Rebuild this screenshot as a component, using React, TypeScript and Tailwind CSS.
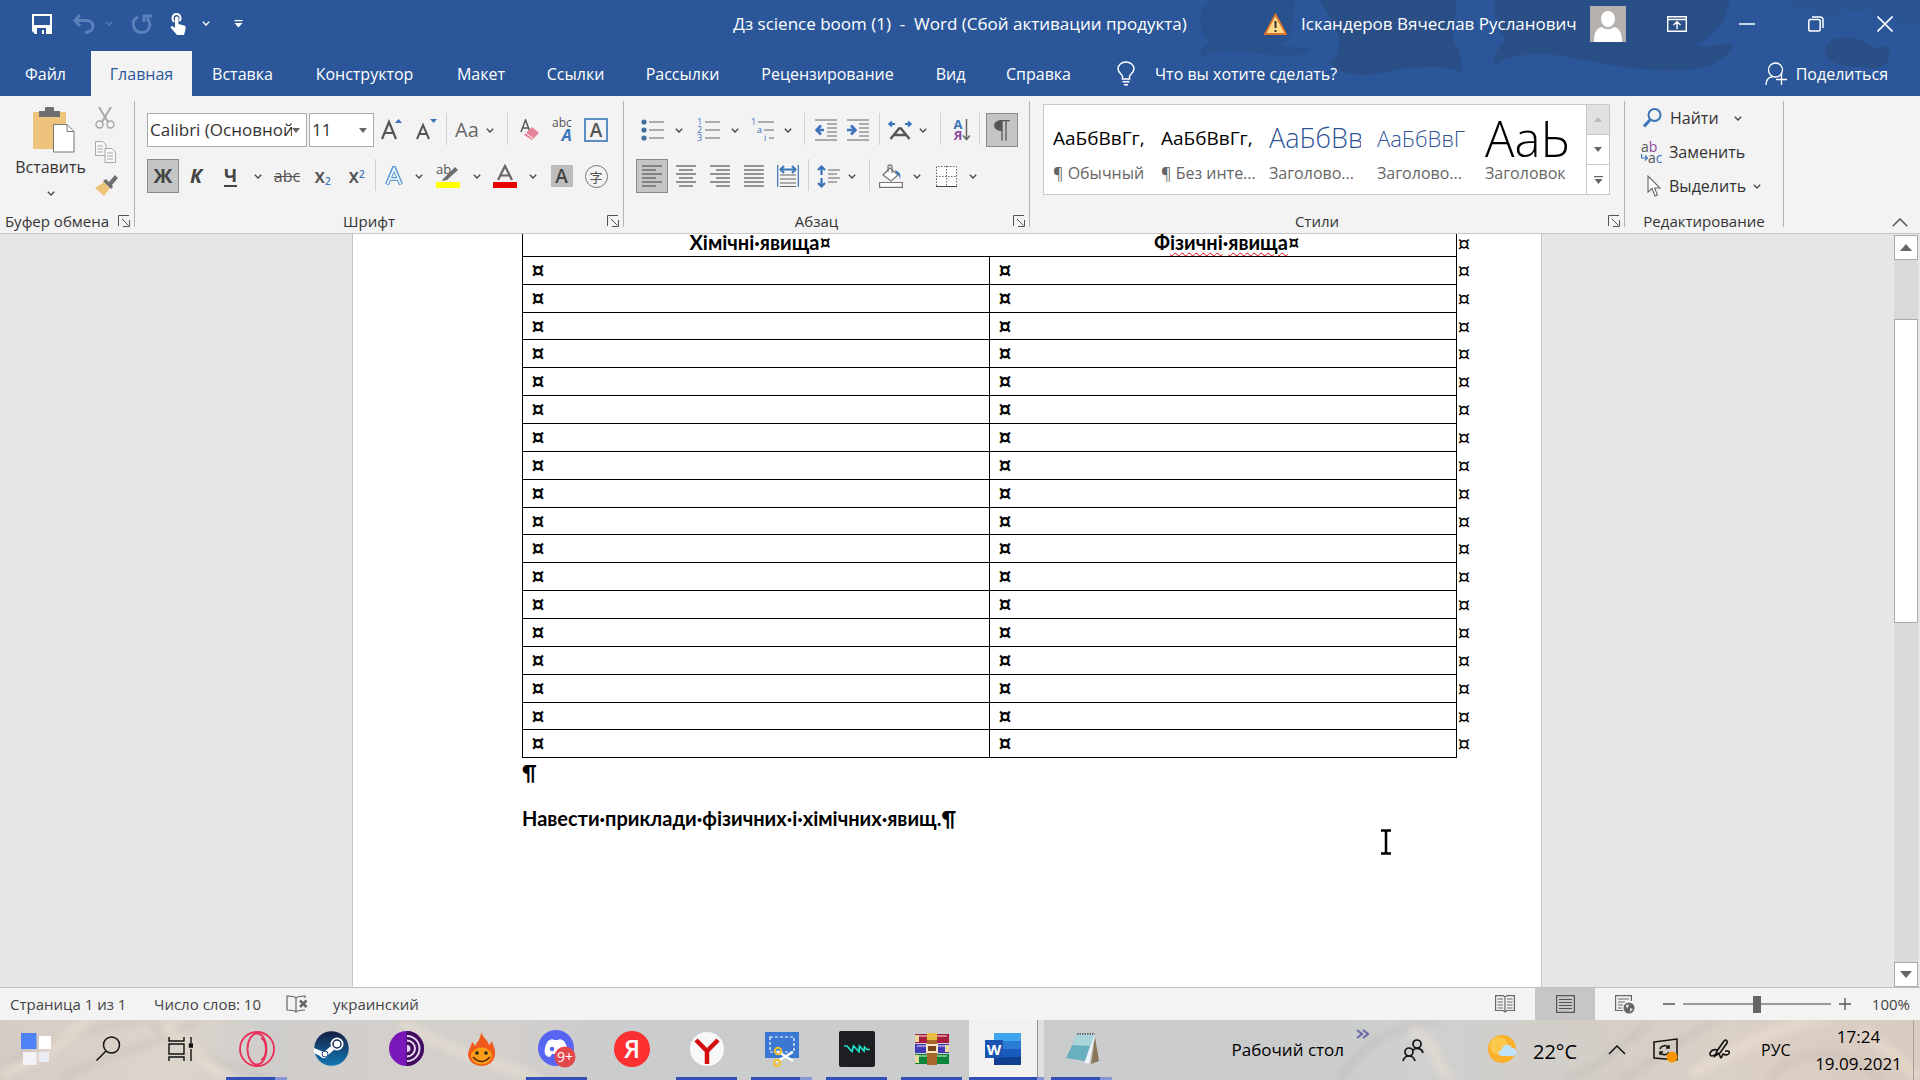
import React from "react";

const UI = "font-['Open_Sans','Noto_Sans',sans-serif]";

function Chevron({ className = "text-[#444]" }: { className?: string }) {
  return (
    <svg className={`shrink-0 ${className}`} width="8" height="5" viewBox="0 0 8 5" fill="none" stroke="currentColor" strokeWidth="1.3">
      <path d="M0.8 0.8 L4 4 L7.2 0.8" />
    </svg>
  );
}

function Tool({ w, label, active, children }: { w: string; label: string; active?: boolean; children: React.ReactNode }) {
  return (
    <button
      aria-label={label}
      className={`flex h-[34px] shrink-0 items-center justify-center ${w} ${active ? "border border-[#8a8a8a] bg-[#c5c5c5]" : ""}`}
    >
      {children}
    </button>
  );
}

function Drop({ w }: { w: string }) {
  return (
    <Tool w={w} label="Параметры">
      <Chevron />
    </Tool>
  );
}

function Sep({ w }: { w: string }) {
  return (
    <div className={`flex h-[32px] shrink-0 justify-center ${w}`}>
      <div className="w-px bg-[#d0d0d0]" />
    </div>
  );
}

function Launcher() {
  return (
    <button aria-label="Дополнительно" className="p-1">
      <svg width="12" height="12" viewBox="0 0 12 12" fill="none" stroke="#555" strokeWidth="1">
        <path d="M0.5 11 V0.5 H11 M4 4 L10.5 10.5 M11.5 5 V11.5 H5" />
      </svg>
    </button>
  );
}

function Group({ w, label, launcher, children }: { w: string; label: string; launcher?: boolean; children: React.ReactNode }) {
  return (
    <section className={`flex shrink-0 flex-col border-r border-[#b4b4b4] ${w}`}>
      <div className="flex-1">{children}</div>
      <div className="flex h-3 items-center text-[15px] leading-5 text-[#333]">
        <span className="flex-1 whitespace-nowrap text-center">{label}</span>
        {launcher && <Launcher />}
      </div>
    </section>
  );
}

function Lines({ rows }: { rows: [number, number][] }) {
  return (
    <svg width="20" height="22" viewBox="0 0 20 22" stroke="#555" strokeWidth="1.2">
      {rows.map(([a, b], i) => (
        <path key={i} d={`M${a} ${1 + i * 4} H${b}`} />
      ))}
    </svg>
  );
}

const tabs = [
  { t: "Вставка", w: "w-[101px]" },
  { t: "Конструктор", w: "w-[143px]" },
  { t: "Макет", w: "w-[90px]" },
  { t: "Ссылки", w: "w-[99px]" },
  { t: "Рассылки", w: "w-[115px]" },
  { t: "Рецензирование", w: "w-[175px]" },
  { t: "Вид", w: "w-[71px]" },
  { t: "Справка", w: "w-[105px]" },
];

function TitleBar() {
  return (
    <div className="relative flex h-[51px] items-center pb-1 text-white">
      <div className="flex w-[260px] shrink-0 items-center pl-8">
        <button aria-label="Сохранить" className="w-[41px]">
          <svg width="20" height="20" viewBox="0 0 20 20">
            <path d="M0 0 H20 V20 H3 L0 17 Z" fill="#fff" />
            <path d="M2 2 H18 V11 H2 Z" fill="#2b579a" />
            <path d="M5 14 H14 V20 H12 V16 H10 V20 H5 Z" fill="#2b579a" />
          </svg>
        </button>
        <button aria-label="Отменить" className="w-8 text-[#5b80bb]">
          <svg width="22" height="20" viewBox="0 0 22 20" fill="none" stroke="currentColor" strokeWidth="3">
            <path d="M7 1 L2 6.500 L7 12 M2 6.500 H13 C22 6.500 23 18 12 18.500" />
          </svg>
        </button>
        <button aria-label="История" className="w-[27px]">
          <Chevron className="text-[#5b80bb]" />
        </button>
        <button aria-label="Повторить" className="w-[38px] text-[#5b80bb]">
          <svg width="20" height="20" viewBox="0 0 20 20" fill="none" stroke="currentColor" strokeWidth="3">
            <path d="M6 3 C-2 7 1 18 9.500 18.500 C18 18.500 20 9 15 4 M12 8 V2 H20" />
          </svg>
        </button>
        <button aria-label="Сенсорный режим" className="w-8">
          <svg width="18" height="22" viewBox="0 0 18 22">
            <path d="M4 9 C1 5 3 1 6.500 1 C10 1 12 5 9.500 8" fill="none" stroke="#fff" strokeWidth="2" />
            <path d="M5 5 C5 3 8.500 3 8.500 5 V11 L14 12.500 C16 13 16 14 15.500 16 L14 22 H7 L1 15 C0 13.500 2 12.500 3 13.500 L5 15 Z" fill="#fff" />
          </svg>
        </button>
        <button aria-label="Режим" className="w-8">
          <Chevron className="text-white" />
        </button>
        <button aria-label="Настройка панели">
          <svg width="9" height="8" viewBox="0 0 9 8" fill="#fff">
            <path d="M0.5 0 H8.500 V1.300 H0.5 Z M0.500 3 H8.500 L4.500 7.500 Z" />
          </svg>
        </button>
      </div>
      <h1 className="flex-1 whitespace-pre pl-[396px] text-center text-[17px] leading-6">
        {"Дз science boom (1)  -  Word (Сбой активации продукта)"}
      </h1>
      <div className="flex shrink-0 items-center">
        <svg className="mr-3.5" width="23" height="22" viewBox="0 0 23 22">
          <path d="M11.500 1.500 L22 21 H1 Z" fill="#ffd98b" stroke="#d9762b" strokeWidth="1.800" />
          <path d="M11.500 8 V15 M11.500 17 V19" stroke="#333" strokeWidth="2" />
        </svg>
        <span className="w-[289px] whitespace-nowrap text-[17px] leading-6">Іскандеров Вячеслав Русланович</span>
        <svg width="36" height="36" viewBox="0 0 36 36">
          <path d="M0 0 H36 V36 H0 Z" fill="#b3b0ad" />
          <ellipse cx="18" cy="13" rx="7" ry="8" fill="#fff" />
          <path d="M4 36 C4 26 7 22 12 21 C15 24 21 24 24 21 C29 22 32 26 32 36 Z" fill="#fff" />
        </svg>
        <button aria-label="Параметры ленты" className="flex w-[102px] justify-center">
          <svg width="20" height="16" viewBox="0 0 20 16" fill="none" stroke="#fff" strokeWidth="1.400">
            <path d="M0.700 0.700 H19.300 V15.300 H0.700 Z M0.700 3.500 H19.300 M10 13 V6 M6.500 9 L10 5.800 L13.500 9" />
          </svg>
        </button>
        <button aria-label="Свернуть" className="flex w-[38px] justify-center">
          <svg width="16" height="2"><path d="M0 1 H16" stroke="#fff" strokeWidth="1.500" /></svg>
        </button>
        <button aria-label="Восстановить" className="flex w-[100px] justify-center">
          <svg width="16" height="16" viewBox="0 0 16 16" fill="none" stroke="#fff" strokeWidth="1.500">
            <path d="M2.500 3.500 H10.500 Q12.200 3.500 12.200 5 V13.500 Q12.200 15 10.500 15 H2.500 Q0.800 15 0.800 13.500 V5 Q0.800 3.500 2.500 3.500 M4 1 H12 Q15 1 15 4 V12" />
          </svg>
        </button>
        <button aria-label="Закрыть" className="flex w-[54px] justify-center pr-4">
          <svg width="16" height="16" viewBox="0 0 16 16" stroke="#fff" strokeWidth="1.600"><path d="M0.500 0.500 L15.500 15.500 M15.500 0.500 L0.500 15.500" /></svg>
        </button>
      </div>
    </div>
  );
}

function Header() {
  return (
    <header className="relative bg-[#2b579a]">
      <svg className="absolute right-0 top-0" width="750" height="96" viewBox="0 0 750 96">
        <g fill="#2a4f87">
          <path d="M40 0 H125 C124 20 122 38 112 45 C122 48 132 46 142 50 C120 62 90 52 60 51 C50 50 40 54 31 58 C28 50 36 46 40 42 C26 30 28 8 40 0 Z" opacity="0.7" />
          <path d="M150 0 H285 C288 18 280 32 285 44 C290 52 292 60 292 72 C270 62 230 68 205 74 C185 76 165 74 158 60 C172 62 170 40 166 30 Z" />
          <path d="M325 0 H560 C556 20 545 36 525 46 C540 48 550 44 560 43 C568 48 552 62 535 67 C490 78 430 62 385 55 C360 52 335 56 324 66 C322 56 330 46 336 40 C326 26 322 12 325 0 Z" />
          <path d="M680 38 C695 38 700 48 708 48 C720 42 722 52 718 60 C712 72 700 68 690 67 C670 68 652 60 655 48 C658 40 668 36 680 38 Z" />
          <path d="M600 0 H750 V22 C735 34 728 20 722 14 C700 20 690 6 670 14 C650 20 640 8 600 0 Z" opacity="0.4" />
        </g>
      </svg>
      <TitleBar />
      <nav className="relative flex h-[45px] items-stretch text-[16px] text-white">
        <button className="w-[91px]">Файл</button>
        <button className="w-[101px] bg-[#f3f3f3] text-[#2b579a]">Главная</button>
        {tabs.map((x) => (
          <button key={x.t} className={x.w}>{x.t}</button>
        ))}
        <button className="flex items-center pl-[26px]">
          <svg width="18" height="25" viewBox="0 0 18 25" fill="none" stroke="#fff" strokeWidth="1.500">
            <path d="M5.500 18 V15.500 C5.500 13.500 1 12 1 7.800 C1 4 4.500 1 9 1 C13.500 1 17 4 17 7.800 C17 12 12.500 13.500 12.500 15.500 V18 Z M5.500 20.800 H12.500 M7 23.800 H11" />
          </svg>
          <span className="pl-5">Что вы хотите сделать?</span>
        </button>
        <button className="ml-auto flex items-center pr-8">
          <svg width="23" height="24" viewBox="0 0 23 24" fill="none" stroke="#fff" strokeWidth="1.300">
            <circle cx="10.500" cy="8" r="7" />
            <path d="M1 23 C1 18 4 15 8 14.500 M16.500 12 V23 M11 17.500 H22" />
          </svg>
          <span className="pl-2">Поделиться</span>
        </button>
      </nav>
    </header>
  );
}

function Clipboard() {
  return (
    <Group w="w-[135px]" label="Буфер обмена" launcher>
      <div className="flex pt-1.5">
        <button className="flex w-[95px] shrink-0 flex-col items-center pl-1.5 text-[16px] text-[#333]">
          <svg width="48" height="46" viewBox="-6 0 48 46">
            <path d="M0 5 H33 V42 H0 Z" fill="#eec47c" />
            <path d="M6 4 H12 V1 Q12 0 13 0 H20 Q21 0 21 1 V4 H27 V10 H6 Z" fill="#6e6e6e" />
            <path d="M20.500 17.500 H34 L41 24.500 V45 H20.500 Z" fill="#fff" stroke="#777" />
            <path d="M34 17.500 V24.500 H41" fill="none" stroke="#777" />
          </svg>
          <span className="pb-3 pt-0.5 leading-6">Вставить</span>
          <Chevron />
        </button>
        <div className="flex flex-col items-start gap-3">
          <button aria-label="Вырезать">
            <svg width="20" height="22" viewBox="0 0 20 22" fill="none" stroke="#a8a8a8" strokeWidth="1.500">
              <path d="M4 0 L13 15 M16 0 L7 15" strokeWidth="2" />
              <circle cx="4.500" cy="17.500" r="3.500" /><circle cx="15.500" cy="17.500" r="3.500" />
            </svg>
          </button>
          <button aria-label="Копировать">
            <svg width="21" height="22" viewBox="0 0 21 22" fill="#f8f8f8" stroke="#a8a8a8">
              <path d="M0.500 0.500 H8 L11 4 V14.500 H0.500 Z M2.500 5 H8 M2.500 8 H8 M2.500 11 H8" />
              <path d="M10 7.500 H17 L20.500 11 V21.500 H10 Z M12 12 H18 M12 15 H18 M12 18 H18" />
            </svg>
          </button>
          <button aria-label="Формат по образцу">
            <svg width="23" height="21" viewBox="0 0 23 21">
              <path d="M0 13 L9 7 L15 13 L9 21 Z" fill="#eec47c" />
              <path d="M8 6 L11 4 L14 7 L20 0 L23 3 L17 10 L18 12 L16 14 Z" fill="#6e6e6e" />
            </svg>
          </button>
        </div>
      </div>
    </Group>
  );
}

function ComboArrow() {
  return (
    <svg className="mr-1.5 shrink-0" width="8" height="5" viewBox="0 0 8 5" fill="#666"><path d="M0 0 H8 L4 5 Z" /></svg>
  );
}

function FontGroup() {
  return (
    <Group w="w-[489px]" label="Шрифт" launcher>
      <div className="flex pl-3 pt-3">
        <label className="flex h-[34px] w-[160px] items-center border border-[#ababab] bg-white">
          <input aria-label="Шрифт" className="min-w-0 flex-1 pl-0.5 text-[17px] text-[#333]" defaultValue="Calibri (Основной" />
          <ComboArrow />
        </label>
        <label className="ml-0.5 flex h-[34px] w-[65px] items-center border border-[#ababab] bg-white">
          <input aria-label="Размер шрифта" className="min-w-0 flex-1 pl-0.5 text-[17px] text-[#333]" defaultValue="11" />
          <ComboArrow />
        </label>
        <Tool w="w-[35px]" label="Увеличить размер">
          <svg width="21" height="22" viewBox="0 0 21 22"><path d="M1 20 L8 3 L15 20 M3.500 14 H12.500" fill="none" stroke="#555" strokeWidth="2.200" /><path d="M14 4 L17.500 0 L21 4 Z" fill="#3b73b9" /></svg>
        </Tool>
        <Tool w="w-[34px]" label="Уменьшить размер">
          <svg width="21" height="22" viewBox="0 0 21 22"><path d="M1 20 L7 6 L13 20 M3.500 15 H11" fill="none" stroke="#555" strokeWidth="2" /><path d="M14 0 H21 L17.500 4 Z" fill="#3b73b9" /></svg>
        </Tool>
        <Sep w="w-[6px]" />
        <Tool w="w-[36px]" label="Регистр"><span className="text-[20px] text-[#666]">Aa</span></Tool>
        <Drop w="w-[10px]" />
        <Sep w="w-[25px]" />
        <Tool w="w-5" label="Очистить формат">
          <svg width="20" height="22" viewBox="0 0 20 22"><path d="M1 13 L5.500 1 L10 13 M2.500 9 H8.500" fill="none" stroke="#555" strokeWidth="1.500" /><path d="M12 8 L19 14 L12 21 L4 16 Z" fill="#e8849a" /><path d="M6 14 L13 19.500" stroke="#fff" /></svg>
        </Tool>
        <Tool w="w-[44px]" label="Фонетика">
          <span className="flex flex-col items-end text-[#555]"><span className="text-[12px] leading-[10px]">abc</span><span className="text-[16px] font-bold italic leading-[14px] text-[#3b73b9]">A</span></span>
        </Tool>
        <Tool w="w-6" label="Граница знака"><span className="flex h-6 w-6 items-center justify-center border-2 border-[#5b8cc4] text-[19px] font-semibold text-[#555]">A</span></Tool>
      </div>
      <div className="flex pl-3 pt-3">
        <Tool w="w-8" label="Полужирный" active><span className="text-[20px] font-bold text-[#444]">Ж</span></Tool>
        <Tool w="w-[34px]" label="Курсив"><span className="text-[20px] font-bold italic text-[#444]">К</span></Tool>
        <Tool w="w-[35px]" label="Подчеркнутый"><span className="border-b-2 border-[#444] text-[18px] font-bold leading-[20px] text-[#444]">Ч</span></Tool>
        <Drop w="w-[19px]" />
        <Tool w="w-10" label="Зачеркнутый"><span className="text-[16px] text-[#555] line-through">abc</span></Tool>
        <Tool w="w-[31px]" label="Подстрочный"><span className="text-[19px] font-semibold text-[#555]">x<sub className="text-[10px] text-[#3b73b9]">2</sub></span></Tool>
        <Tool w="w-[37px]" label="Надстрочный"><span className="text-[19px] font-semibold text-[#555]">x<sup className="text-[10px] text-[#3b73b9]">2</sup></span></Tool>
        <Sep w="w-px" />
        <Tool w="w-9" label="Текстовые эффекты">
          <svg width="20" height="20" viewBox="0 0 20 20" fill="none"><path d="M3 18.500 L10 1.500 L17 18.500 M6 13 H14" stroke="#5b9bd5" strokeWidth="4.200" /><path d="M3.300 18 L10 2.500 L16.700 18 M6 13 H14" stroke="#fff" strokeWidth="1.600" /></svg>
        </Tool>
        <Drop w="w-[14px]" />
        <Tool w="w-11" label="Выделение цветом">
          <svg width="24" height="24" viewBox="0 0 24 24"><path d="M0 18 H24 V24 H0 Z" fill="#ff0" /><text x="0" y="10" fontSize="13" fill="#555">ab</text><path d="M7 15 L19 3 L22 6 L11 16 L6 17 Z" fill="#6e6e6e" /></svg>
        </Tool>
        <Drop w="w-[14px]" />
        <Tool w="w-[42px]" label="Цвет текста">
          <svg width="24" height="24" viewBox="0 0 24 24"><path d="M5 16 L12 2 L19 16 M8 11.500 H16" fill="none" stroke="#666" strokeWidth="2.200" /><path d="M0 18 H24 V24 H0 Z" fill="#e60000" /></svg>
        </Tool>
        <Drop w="w-[14px]" />
        <Tool w="w-[43px]" label="Затенение знака"><span className="flex h-[22px] w-[22px] items-center justify-center bg-[#bdbdbd] text-[19px] font-semibold text-[#444]">A</span></Tool>
        <Tool w="w-[26px]" label="Знаки в круге"><span className="flex h-[23px] w-[23px] items-center justify-center rounded-full border-[1.5px] border-[#777] font-['Noto_Sans_CJK_SC',sans-serif] text-[13px] leading-none text-[#555]">字</span></Tool>
      </div>
    </Group>
  );
}

function ParagraphGroup() {
  return (
    <Group w="w-[406px]" label="Абзац" launcher>
      <div className="flex pl-3 pt-3">
        <Tool w="w-8" label="Маркеры">
          <svg width="23" height="22" viewBox="0 0 23 22"><g fill="#41719c"><circle cx="3" cy="3" r="2.600" /><circle cx="3" cy="11" r="2.600" /><circle cx="3" cy="19" r="2.600" /></g><path d="M8 3 H23 M8 11 H23 M8 19 H23" stroke="#666" strokeWidth="1.200" /></svg>
        </Tool>
        <Drop w="w-[22px]" />
        <Tool w="w-9" label="Нумерация">
          <svg width="23" height="24" viewBox="0 0 23 24"><g fill="#3b73b9" fontSize="9"><text x="0" y="7">1</text><text x="0" y="15">2</text><text x="0" y="23">3</text></g><path d="M8 4 H23 M8 12 H23 M8 20 H23" stroke="#666" strokeWidth="1.200" /></svg>
        </Tool>
        <Drop w="w-[18px]" />
        <Tool w="w-9" label="Многоуровневый список">
          <svg width="23" height="24" viewBox="0 0 23 24"><g fill="#3b73b9" fontSize="9"><text x="0" y="7">1</text><text x="6" y="15">a</text><text x="13" y="23">i</text></g><path d="M7 4 H23 M13 12 H23 M18 20 H23" stroke="#666" strokeWidth="1.200" /></svg>
        </Tool>
        <Drop w="w-4" />
        <Sep w="w-4" />
        <Tool w="w-7" label="Уменьшить отступ">
          <svg width="22" height="22" viewBox="0 0 22 22"><path d="M0 1 H22 M12 5 H22 M12 9 H22 M12 13 H22 M12 17 H22 M0 21 H22" stroke="#666" strokeWidth="1.200" /><path d="M9 11 H2 M6 6.500 L1.500 11 L6 15.500" fill="none" stroke="#3b73b9" strokeWidth="2.600" /></svg>
        </Tool>
        <Tool w="w-9" label="Увеличить отступ">
          <svg width="22" height="22" viewBox="0 0 22 22"><path d="M0 1 H22 M12 5 H22 M12 9 H22 M12 13 H22 M12 17 H22 M0 21 H22" stroke="#666" strokeWidth="1.200" /><path d="M0 11 H8 M4 6.500 L8.500 11 L4 15.500" fill="none" stroke="#3b73b9" strokeWidth="2.600" /></svg>
        </Tool>
        <Sep w="w-[6px]" />
        <Tool w="w-9" label="Масштаб знаков">
          <svg width="24" height="19" viewBox="0 0 24 19" fill="none"><path d="M2.500 18 L11 7.500 H13 L21.500 18 M6 14 H18" stroke="#555" strokeWidth="2.400" /><path d="M1 3 H7 M4 0.500 L1 3 L4 5.500 M23 3 H17 M20 0.500 L23 3 L20 5.500" stroke="#3b73b9" strokeWidth="1.800" /></svg>
        </Tool>
        <Drop w="w-[10px]" />
        <Sep w="w-6" />
        <Tool w="w-[21px]" label="Сортировка">
          <span className="flex items-center">
            <span className="flex flex-col text-[13px] font-bold leading-[11px]"><span className="text-[#3b73b9]">А</span><span className="text-[#8e4b9e]">Я</span></span>
            <svg width="9" height="22" viewBox="0 0 9 22" fill="none" stroke="#666" strokeWidth="1.500"><path d="M4.500 0 V20 M1 16.500 L4.500 20.500 L8 16.500" /></svg>
          </span>
        </Tool>
        <Sep w="w-[13px]" />
        <Tool w="w-8" label="Непечатаемые знаки" active>
          <svg width="16" height="21" viewBox="0 0 16 21"><path d="M7 0.700 H16 M8 0.700 V20.500 M12 0.700 V20.500" stroke="#555" strokeWidth="1.300" /><path d="M8 0 V11 C-2.500 11 -2.500 0 8 0 Z" fill="#555" /></svg>
        </Tool>
      </div>
      <div className="flex pl-3 pt-3">
        <Tool w="w-8" label="По левому краю" active><Lines rows={[[0, 20], [0, 14], [0, 20], [0, 14], [0, 20], [0, 14]]} /></Tool>
        <Tool w="w-9" label="По центру"><Lines rows={[[0, 20], [3, 17], [0, 20], [3, 17], [0, 20], [3, 17]]} /></Tool>
        <Tool w="w-8" label="По правому краю"><Lines rows={[[0, 20], [6, 20], [0, 20], [6, 20], [0, 20], [6, 20]]} /></Tool>
        <Tool w="w-9" label="По ширине"><Lines rows={[[0, 20], [0, 20], [0, 20], [0, 20], [0, 20], [0, 20]]} /></Tool>
        <Tool w="w-8" label="Распределенный">
          <svg width="22" height="22" viewBox="0 0 22 22" fill="none"><path d="M0.700 0 V22 M21.300 0 V22" stroke="#3b73b9" strokeWidth="1.200" /><path d="M3 10 H19 M3 14 H19 M3 18 H19 M3 21.500 H19" stroke="#666" strokeWidth="1.200" /><path d="M4 4.500 H18 M7 1 L3.500 4.500 L7 8 M15 1 L18.500 4.500 L15 8" stroke="#3b73b9" strokeWidth="2" /></svg>
        </Tool>
        <Sep w="w-2" />
        <Tool w="w-[33px]" label="Интервал">
          <svg width="23" height="23" viewBox="0 0 23 23" fill="none"><path d="M11 5 H23 M11 9 H20 M11 13 H23 M11 17 H20" stroke="#666" strokeWidth="1.200" /><path d="M4.500 1 V10 M1 5 L4.500 1.500 L8 5 M4.500 13 V22 M1 18 L4.500 21.500 L8 18" stroke="#3b73b9" strokeWidth="2.200" /></svg>
        </Tool>
        <Drop w="w-[14px]" />
        <Sep w="w-5" />
        <Tool w="w-6" label="Заливка">
          <svg width="24" height="24" viewBox="0 0 24 24" fill="none"><path d="M0.600 18.500 H23.400 V23.400 H0.600 Z" fill="#fff" stroke="#777" strokeWidth="1.200" /><path d="M11 4 L19 11 L12 17 L4 11 Z" fill="#fff" stroke="#777" strokeWidth="1.300" /><path d="M9 8 V3 Q9 1 11 1 Q13 1 13 3 V9" stroke="#777" strokeWidth="1.300" /><path d="M16 6 Q23 8 21 16 Q21 11 17 9 Z" fill="#3b73b9" /></svg>
        </Tool>
        <Drop w="w-7" />
        <Tool w="w-[30px]" label="Границы">
          <svg width="21" height="21" viewBox="0 0 21 21" fill="#fff" stroke="#666"><path d="M0.500 20 V0.500 H20.500 V20 M10.500 0 V20 M0 10.500 H20" strokeDasharray="1.500 1.500" /><path d="M0 20.500 H21" stroke="#444" /></svg>
        </Tool>
        <Drop w="w-6" />
      </div>
    </Group>
  );
}

const styleItems = [
  { s: "АаБбВвГг,", l: "¶ Обычный", c: "text-[19px] text-black" },
  { s: "АаБбВвГг,", l: "¶ Без инте...", c: "text-[19px] text-black" },
  { s: "АаБбВвГ", l: "Заголово...", c: "text-[27px] font-light text-[#2f5496]" },
  { s: "АаБбВвГ", l: "Заголово...", c: "text-[22px] font-light text-[#2f5496]" },
  { s: "АаЬ", l: "Заголовок", c: "text-[49px] font-light text-black" },
];

function StylesGroup() {
  return (
    <Group w="w-[595px]" label="Стили" launcher>
      <div className="flex pl-[13px] pt-[3px]">
        <div className="flex h-[91px] w-[567px] border border-[#c8c8c8] bg-white">
          <div className="flex flex-1 gap-4 pl-[9px]">
            {styleItems.map((x, i) => (
              <button key={i} className="flex w-[92px] flex-col items-start pt-2 text-left">
                <span className={`flex h-[50px] w-full items-center overflow-hidden whitespace-nowrap leading-[48px] ${x.c}`}>{x.s}</span>
                <span className="w-full whitespace-nowrap text-[16px] leading-5 text-[#666]">{x.l}</span>
              </button>
            ))}
          </div>
          <div className="flex w-[23px] flex-col border-l border-[#c8c8c8]">
            <button aria-label="Вверх" className="flex flex-1 items-center justify-center bg-[#e1e1e1]"><svg width="8" height="5" fill="#bbb"><path d="M0 5 H8 L4 0 Z" /></svg></button>
            <button aria-label="Вниз" className="flex flex-1 items-center justify-center border-y border-[#c8c8c8]"><svg width="8" height="5" fill="#666"><path d="M0 0 H8 L4 5 Z" /></svg></button>
            <button aria-label="Все стили" className="flex flex-1 items-center justify-center"><svg width="9" height="8" fill="#666"><path d="M0 0 H9 V1.200 H0 Z M0.500 3 H8.500 L4.500 8 Z" /></svg></button>
          </div>
        </div>
      </div>
    </Group>
  );
}

function EditingGroup() {
  return (
    <Group w="w-[159px]" label="Редактирование">
      <div className="flex flex-col text-[16px] text-[#333]">
        <button className="flex h-[34px] items-center pl-[18px]">
          <svg width="19" height="20" viewBox="0 0 19 20" fill="none" stroke="#3b73b9" strokeWidth="2"><circle cx="11.500" cy="7" r="6" /><path d="M7 12 L1 18.500" strokeWidth="3" /></svg>
          <span className="w-[72px] pl-2 text-left">Найти</span>
          <Chevron />
        </button>
        <button className="flex h-[34px] items-center pl-[16px]">
          <span className="flex w-6 flex-col items-start text-[14px] leading-[11px] text-[#555]">
            <span>a<span className="text-[#8e4b9e]">b</span></span>
            <span className="flex items-center"><svg width="7" height="7" viewBox="0 0 7 7" fill="none" stroke="#3b73b9" strokeWidth="1.200"><path d="M0.600 0 V4 H6 M4 1.500 L6.300 4 L4 6.500" /></svg>a<span className="text-[#3b73b9]">c</span></span>
          </span>
          <span className="pl-1">Заменить</span>
        </button>
        <button className="flex h-[34px] items-center pl-[22px]">
          <svg className="shrink-0" width="14" height="22" viewBox="0 0 14 22" fill="#fff" stroke="#666" strokeWidth="1.100"><path d="M1 1 V17 L5 13.500 L8 21 L10.500 20 L7.500 13 H13 Z" /></svg>
          <span className="w-[92px] shrink-0 pl-2 text-left">Выделить</span>
          <Chevron />
        </button>
      </div>
    </Group>
  );
}

function Ribbon() {
  return (
    <div className="flex h-[138px] items-stretch border-b border-[#c6c6c6] bg-[#f3f3f3] pb-1.5 pt-[5px]">
      <Clipboard />
      <FontGroup />
      <ParagraphGroup />
      <StylesGroup />
      <EditingGroup />
      <button aria-label="Свернуть ленту" className="ml-auto self-end pr-3">
        <svg width="16" height="9" viewBox="0 0 16 9" fill="none" stroke="#555" strokeWidth="1.500"><path d="M0.700 8.300 L8 1 L15.300 8.300" /></svg>
      </button>
    </div>
  );
}

const rowHeights = Array.from({ length: 18 }, (_, i) => (i === 2 || i === 9 || i === 16 ? "h-[27px]" : "h-7"));

function Misspelled({ children }: { children: string }) {
  return <span className="underline decoration-red-600 decoration-wavy decoration-1 underline-offset-2">{children}</span>;
}

function Document() {
  return (
    <div className="flex min-h-0 flex-1 bg-[#e6e6e6]">
      <div className="flex-1 overflow-hidden">
        <article className="relative mx-auto h-full w-[1190px] border-x border-[#c6c6c6] bg-white pl-[169px] font-['Lato','Open_Sans',sans-serif] text-[20px] font-bold text-black">
          <table className="w-[950px] table-fixed border-collapse leading-[22px]">
            <colgroup>
              <col className="w-[467px]" />
              <col className="w-[467px]" />
              <col className="w-4" />
            </colgroup>
            <thead>
              <tr className="h-[22px] align-top leading-[17px]">
                <th className="border-b border-l border-black pl-2 align-top">Хімічні·явища¤</th>
                <th className="border-b border-r border-black pl-2 align-top">
                  Ф<Misspelled>ізичні</Misspelled>·<Misspelled>явища</Misspelled>¤
                </th>
                <td className="text-[24px] font-normal">¤</td>
              </tr>
            </thead>
            <tbody className="text-[24px]">
              {rowHeights.map((h, i) => (
                <tr key={i} className={h}>
                  <td className="border border-black pl-2">¤</td>
                  <td className="border border-black pl-2">¤</td>
                  <td className="font-normal">¤</td>
                </tr>
              ))}
            </tbody>
          </table>
          <p className="leading-7">¶</p>
          <p className="pt-[18px] leading-7">Навести·приклади·фізичних·і·хімічних·явищ.¶</p>
          <svg className="absolute left-[1027px] top-[595px]" width="12" height="26" viewBox="0 0 12 26" fill="none" stroke="#000" strokeWidth="2.500"><path d="M1 1.500 H5 L6 3 L7 1.500 H11 M6 2 V24 M1 24.500 H5 L6 23 L7 24.500 H11" /></svg>
        </article>
      </div>
      <div className="flex w-[26px] flex-col pr-0.5 pt-px">
        <button aria-label="Прокрутить вверх" className="flex h-[25px] items-center justify-center border border-[#ababab] bg-white"><svg width="12" height="7" fill="#666"><path d="M0 7 H12 L6 0 Z" /></svg></button>
        <div className="flex-1 bg-[#dadada] pt-[59px]"><div className="h-[304px] border border-[#ababab] bg-white" /></div>
        <button aria-label="Прокрутить вниз" className="flex h-[25px] items-center justify-center border border-[#ababab] bg-white"><svg width="12" height="7" fill="#666"><path d="M0 0 H12 L6 7 Z" /></svg></button>
      </div>
    </div>
  );
}

function StatusBar() {
  return (
    <footer className="flex h-[33px] items-center border-t border-[#c0c0c0] bg-[#f3f3f3] text-[15px] text-[#444]">
      <span className="w-[154px] pl-2.5">Страница 1 из 1</span>
      <span className="w-[132px]">Число слов: 10</span>
      <button aria-label="Правописание" className="w-[47px]">
        <svg width="22" height="18" viewBox="0 0 22 18" fill="none" stroke="#666" strokeWidth="1.200"><path d="M10 3 Q8 1 1 1 V15 Q8 15 10 17 Q12 15 19 15 M10 3 V17 M10 3 Q12 1 19 1 V3" /><path d="M14 5.500 L20.500 12 M20.500 5.500 L14 12" strokeWidth="2.500" /></svg>
      </button>
      <span>украинский</span>
      <div className="ml-auto flex h-full items-center">
        <button aria-label="Режим чтения" className="flex w-[60px] justify-center">
          <svg width="20" height="18" viewBox="0 0 20 18" fill="none" stroke="#666" strokeWidth="1.200"><path d="M0.600 0.600 H8 L10 2 L12 0.600 H19.400 V15.500 H12 L10 17 L8 15.500 H0.600 Z M10 2 V17 M2.500 4 H8 M2.500 7 H8 M2.500 10 H8 M2.500 13 H8 M12 4 H17.500 M12 7 H17.500 M12 10 H17.500 M12 13 H17.500" /></svg>
        </button>
        <button aria-label="Разметка страницы" className="flex h-full w-[60px] items-center justify-center bg-[#c6c6c6]">
          <svg width="19" height="18" viewBox="0 0 19 18" fill="none" stroke="#555" strokeWidth="1.200"><path d="M0.600 0.600 H18.400 V17.400 H0.600 Z M3 4.500 H16 M3 7.500 H16 M3 10.500 H16 M3 13.500 H16" /></svg>
        </button>
        <button aria-label="Веб-документ" className="flex w-[60px] justify-center">
          <svg width="20" height="19" viewBox="0 0 20 19" fill="none" stroke="#666" strokeWidth="1.200"><path d="M8 15.500 H0.600 V0.600 H16.400 V6 M3 4 H14 M3 7 H10 M3 10 H8 M3 13 H7" /><circle cx="14" cy="13" r="5.500" fill="#666" stroke="none" /><path d="M11 10 L14 9.500 L13 13 L11 12 Z M15 13 L18 14 L15 17 Z" fill="#ddd" stroke="none" /></svg>
        </button>
        <button aria-label="Уменьшить" className="ml-2 mr-2"><svg width="12" height="2"><path d="M0 1 H12" stroke="#555" strokeWidth="1.500" /></svg></button>
        <input
          type="range"
          aria-label="Масштаб"
          defaultValue={50}
          className="h-[17px] w-[148px] appearance-none bg-[linear-gradient(#9a9a9a,#9a9a9a)] bg-[length:100%_2px] bg-center bg-no-repeat [&::-webkit-slider-thumb]:h-[17px] [&::-webkit-slider-thumb]:w-2 [&::-webkit-slider-thumb]:appearance-none [&::-webkit-slider-thumb]:bg-[#666]"
        />
        <button aria-label="Увеличить" className="ml-2"><svg width="12" height="12"><path d="M0 6 H12 M6 0 V12" stroke="#555" strokeWidth="1.300" /></svg></button>
        <span className="w-[69px] pr-2.5 text-right">100%</span>
      </div>
    </footer>
  );
}

function TaskButton({ label, w = "w-[75px]", bar, active, children }: { label: string; w?: string; bar?: "full" | "multi"; active?: boolean; children: React.ReactNode }) {
  return (
    <button aria-label={label} className={`flex h-full shrink-0 flex-col ${w}`}>
      <span className={`flex w-full flex-1 items-center justify-center ${active ? "bg-[#f1f1f0]" : ""}`}>{children}</span>
      <span className={`flex h-[3px] w-full ${active ? "" : "px-[7px]"}`}>
        {bar && <span className="flex-1 bg-[#3450b6]" />}
        {bar === "multi" && <span className="w-3 bg-[#8795d3]" />}
      </span>
    </button>
  );
}

function Taskbar() {
  return (
    <div className="relative flex h-[60px] items-center overflow-hidden bg-[linear-gradient(90deg,#d6ccc6_0%,#ddd5cc_9%,#cfcdcb_14%,#d4d0cc_25%,#cbccce_32%,#cacbcb_68%,#cfd0d0_74%,#d3cec8_82%,#dbd0c6_90%,#d8cbc0_100%)] text-black">
      <svg className="absolute inset-0 h-full w-full blur-[3px]" viewBox="0 0 1920 60" preserveAspectRatio="none" fill="none">
        <g stroke="#8c8a8a" strokeWidth="6" opacity="0.14">
          <path d="M0 50 C40 20 90 5 160 0 M60 60 C90 38 150 30 200 0 M150 0 C170 30 220 40 270 60 M1340 60 C1360 20 1400 5 1440 0 M1560 60 C1600 50 1630 20 1650 0 M1620 60 C1660 40 1690 10 1720 0 M1770 60 C1790 30 1840 20 1880 60" />
        </g>
        <g stroke="#f3e6d4" strokeWidth="12" opacity="0.4">
          <path d="M0 55 C60 30 60 20 90 0 M165 10 C200 30 210 50 230 60 M400 0 C440 30 490 40 540 60 M1410 10 C1440 20 1430 40 1450 60 M1690 55 C1740 30 1780 0 1830 0 M1860 10 C1890 30 1900 40 1920 60" />
        </g>
      </svg>
      <div className="relative flex h-full w-full items-center">
        <TaskButton label="Пуск" w="w-[72px]">
          <svg width="31" height="32" viewBox="0 0 31 32"><path d="M0 0 H15.500 V16 H0 Z" fill="#4f82f7" /><path d="M18 3 H30 V16 H18 Z" fill="#fff" /><path d="M2 19 H15.500 V32 H2 Z" fill="#f2f3f7" /><path d="M18 19 H28 V29 H18 Z" fill="#e9ecf2" /></svg>
        </TaskButton>
        <TaskButton label="Поиск" w="w-[72px]">
          <svg width="25" height="25" viewBox="0 0 25 25" fill="none" stroke="#111" strokeWidth="1.500"><circle cx="15.500" cy="9" r="8" /><path d="M10 15 L0.500 24.500" /></svg>
        </TaskButton>
        <TaskButton label="Представление задач" w="w-[72px]">
          <svg width="25" height="24" viewBox="0 0 25 24" fill="none" stroke="#111" strokeWidth="1.400"><path d="M1 0 V4 H16 V0 M1 7 H16 V17 H1 Z M1 24 V20 H16 V24 M23 0 V6 M23 12 V24" /><path d="M21.500 7 H24.500 V10 H21.500 Z" fill="#111" /></svg>
        </TaskButton>
        <div className="w-[3px]" />
        <TaskButton label="Opera" bar="multi">
          <svg width="36" height="36" viewBox="0 0 36 36" fill="none" stroke="#e8305a" strokeWidth="1.800"><circle cx="18" cy="18" r="17" /><ellipse cx="18" cy="18" rx="9.500" ry="15.500" /><path d="M22 7 C28.500 10 28.500 26 22 29" /></svg>
        </TaskButton>
        <TaskButton label="Steam">
          <svg width="35" height="35" viewBox="0 0 35 35"><defs><linearGradient id="st" x2="0" y2="1"><stop offset="0" stopColor="#171d42" /><stop offset="1" stopColor="#1179b5" /></linearGradient></defs><circle cx="17.500" cy="17.500" r="17.300" fill="url(#st)" /><path d="M0 17 L10 21 L17 15 L20 19 L14 24 C13 28 8 28 6 25 L0 22 Z" fill="#fff" /><circle cx="23" cy="13" r="6.500" fill="#fff" /><circle cx="23" cy="13" r="4" fill="#fff" stroke="#1a2b56" strokeWidth="1.500" /><circle cx="11" cy="23" r="3" fill="none" stroke="#1a4b86" /></svg>
        </TaskButton>
        <TaskButton label="Tor">
          <svg width="35" height="35" viewBox="0 0 35 35" fill="none"><circle cx="17.500" cy="17.500" r="17.500" fill="#7a17b8" /><path d="M17.500 0 A17.500 17.500 0 0 1 17.500 35 Z" fill="#420c5d" /><path d="M18 5 A12.500 12.500 0 0 1 18 30 M18 9.500 A8 8 0 0 1 18 25.500" stroke="#e6d4f1" strokeWidth="2" /><path d="M18 14 A3.500 3.500 0 0 1 18 21 Z" fill="#e6d4f1" /></svg>
        </TaskButton>
        <TaskButton label="Hola">
          <svg width="28" height="34" viewBox="0 0 28 34"><path d="M13 0 C15 6 20 8 21 13 C23 12 23 10 24 9 C25 14 28 17 27 23 C26 30 20 34 14 34 C7 34 1 30 0 23 C0 18 3 15 4 10 C6 11 6 13 7 14 C10 9 13 6 13 0 Z" fill="#f05a1a" /><ellipse cx="13.500" cy="24" rx="10.500" ry="8.500" fill="#fb9d18" /><circle cx="9" cy="21" r="1.800" fill="#222" /><circle cx="18" cy="21" r="1.800" fill="#222" /><path d="M5 25 Q13.500 34 22 25" fill="none" stroke="#5a2500" strokeWidth="1.500" /></svg>
        </TaskButton>
        <TaskButton label="Discord" bar="full">
          <svg width="38" height="38" viewBox="0 0 38 38"><circle cx="18" cy="18" r="18" fill="#5865f2" /><path d="M10 11 C13 9 15 9 16 10 H20 C21 9 23 9 26 11 C29 15 30 20 29 24 C27 26 25 27 24 27 L22 24 H14 L12 27 C10 27 8 26 7 24 C6 20 7 15 10 11 Z" fill="#fff" /><circle cx="14" cy="19" r="2.300" fill="#5865f2" /><circle cx="27" cy="27" r="10.500" fill="#e2484c" /><text x="27" y="32" fontSize="14" fill="#fff" textAnchor="middle">9+</text></svg>
        </TaskButton>
        <TaskButton label="Яндекс">
          <svg width="36" height="36" viewBox="0 0 36 36"><circle cx="18" cy="18" r="18" fill="#fc3030" /><text x="18" y="27" fontSize="25" fontWeight="600" fill="#fff" textAnchor="middle">Я</text></svg>
        </TaskButton>
        <TaskButton label="Яндекс.Браузер" bar="full">
          <svg width="36" height="36" viewBox="0 0 36 36"><circle cx="18" cy="18" r="17.500" fill="#f8f8f8" stroke="#bbb" strokeWidth="0.600" /><path d="M7 9 L18 20 L29 9 M18 19 V33" fill="none" stroke="#d3100f" strokeWidth="4.500" /></svg>
        </TaskButton>
        <TaskButton label="Ножницы" bar="multi">
          <svg width="36" height="36" viewBox="0 0 36 36" fill="none"><path d="M1 1 H35 V27 H1 Z" fill="#3a78d4" /><path d="M6 6 H30 V21 H6 Z" stroke="#fff" strokeWidth="1.200" strokeDasharray="3 2" /><path d="M13 20 L29 30 M12 31 L29 21" stroke="#fff" strokeWidth="2.500" /><circle cx="14" cy="20" r="3.200" stroke="#f0c12c" strokeWidth="2" /><circle cx="13" cy="32" r="3" stroke="#f0c12c" strokeWidth="2" /></svg>
        </TaskButton>
        <TaskButton label="Voicemod" bar="full">
          <svg width="36" height="36" viewBox="0 0 36 36" fill="none"><path d="M2 0 H34 Q36 0 36 2 V34 Q36 36 34 36 H2 Q0 36 0 34 V2 Q0 0 2 0 Z" fill="#1d1e22" /><path d="M5 15 H8 L13 20.500 L14.500 15 L20 20.500 L20.500 15 L25 20 L25.500 16 L28 18.500 H31" stroke="#1fe0c8" strokeWidth="1.700" /></svg>
        </TaskButton>
        <TaskButton label="WinRAR" bar="full">
          <svg width="36" height="32" viewBox="0 0 36 32"><path d="M1 1 H35 V10 H1 Z" fill="#a81d3b" /><path d="M1 11 H35 V20 H1 Z" fill="#4338b5" /><path d="M1 21 H35 V31 H1 Z" fill="#0c8436" /><path d="M3 3 H33 M3 13 H33 M3 23 H33" stroke="#ffffff70" strokeWidth="2" /><path d="M1 2 H5 V9 H1 Z M1 22 H5 V30 H1 Z M31 12 H35 V19 H31 Z" fill="#e8d9a0" /><path d="M13 0 H23 V32 H13 Z" fill="#a8662a" /><path d="M13 0 H23 V7 H13 Z" fill="#e8bc3e" /><path d="M13 12 H23 V19 H13 Z" fill="#7a431b" stroke="#f4e6c2" strokeWidth="2" /></svg>
        </TaskButton>
        <TaskButton label="Word" bar="full" w="w-[68px]" active>
          <svg width="36" height="32" viewBox="0 0 36 32"><path d="M9 0 H36 V8 H9 Z" fill="#41a5ee" /><path d="M9 8 H36 V16 H9 Z" fill="#2b7cd3" /><path d="M9 16 H36 V24 H9 Z" fill="#185abd" /><path d="M9 24 H36 V32 H9 Z" fill="#103f91" /><path d="M0 7 H18 V25 H0 Z" fill="#1a53b0" /><text x="9" y="21.500" fontSize="15" fontWeight="700" fill="#fff" textAnchor="middle">W</text></svg>
        </TaskButton>
        <div className="flex h-full w-[7px] flex-col">
          <div className="flex-1 border-l border-[#8f8f8f] bg-[#dfe0e0]" />
          <div className="h-[3px] bg-[#8795d3]" />
        </div>
        <TaskButton label="Блокнот" bar="multi">
          <svg width="34" height="32" viewBox="0 0 34 32"><path d="M30 4 L34 28 L26 31 Z" fill="#8a7558" /><path d="M13 1 H30 L24 31 L20 30 Z" fill="#f0f3f5" /><path d="M12 2 H29 L20 28 L1 25 Z" fill="#68b0c0" /><path d="M12 2 H29 L25 13 L7 12 Z" fill="#a9d5dd" /><path d="M12 1 H30" stroke="#667" strokeWidth="2" strokeDasharray="1.500 1" /></svg>
        </TaskButton>
        <span className="ml-auto text-[17px]">Рабочий стол</span>
        <button aria-label="Ещё" className="h-full w-[58px] self-start pl-3">
          <svg className="mb-8" width="14" height="10" viewBox="0 0 14 10" fill="none" stroke="#6a6aa8" strokeWidth="2.200"><path d="M1 1 L6 5 L1 9 M7 1 L12 5 L7 9" /></svg>
        </button>
        <button aria-label="Люди" className="w-[86px]">
          <svg width="22" height="23" viewBox="0 0 22 23" fill="none" stroke="#111" strokeWidth="1.700"><circle cx="15" cy="5" r="4" /><circle cx="7" cy="13" r="4" /><path d="M1 22 C2 18 4 17 7 17 C10 17 12 18 13 22 M11 11 C14 8.500 20 9 21 14" /></svg>
        </button>
        <button className="flex items-center text-[20px]">
          <svg width="31" height="30" viewBox="0 0 31 30"><circle cx="14" cy="14" r="14" fill="#fbb02c" /><circle cx="11" cy="11" r="9" fill="#fdc94d" /><path d="M14 21 C9 21 10 15 14 15 C14 9 22 8 24 13 C29 12 30 20 25 21 Z" fill="#bfe3f8" /></svg>
          <span className="w-[89px] pl-3.5 pt-1 text-left">22°C</span>
        </button>
        <button aria-label="Скрытые значки" className="w-[45px]"><svg width="18" height="10" viewBox="0 0 18 10" fill="none" stroke="#111" strokeWidth="1.500"><path d="M1 9 L9 1 L17 9" /></svg></button>
        <button aria-label="Обновление" className="w-[56px]">
          <svg width="25" height="25" viewBox="0 0 25 25" fill="none" stroke="#111" strokeWidth="1.500"><path d="M1 4 L24 1 V22 L1 20 Z" /><path d="M7 11 A5 5 0 0 1 16 10 M16 7 V10 H13 M16 14 A5 5 0 0 1 7 14 M7 17 V14 H10" /><circle cx="19" cy="19" r="5.500" fill="#f79400" stroke="none" /></svg>
        </button>
        <button aria-label="Перо" className="w-[52px]">
          <svg width="21" height="22" viewBox="0 0 21 22" fill="none" stroke="#111" strokeWidth="1.600"><path d="M6 17 L8 12 L15 2 C17 0 19 2 18 4 L11 14 Z M9 11 C1 9 -1 17 3 17 C7 17 9 11 11 17 C12 21 13 17 14 15 C20 18 22 12 19 12 H16" /></svg>
        </button>
        <span className="w-[54px] text-[16px]">РУС</span>
        <div className="flex w-[87px] flex-col text-center text-[17px] leading-[27px]">
          <time>17:24</time>
          <time>19.09.2021</time>
        </div>
        <div className="ml-[11px] mr-1.5 h-full w-px bg-[#a8a098]" />
      </div>
    </div>
  );
}

export default function App() {
  return (
    <div className={`flex h-screen w-full flex-col overflow-hidden ${UI}`}>
      <Header />
      <Ribbon />
      <Document />
      <StatusBar />
      <Taskbar />
    </div>
  );
}
